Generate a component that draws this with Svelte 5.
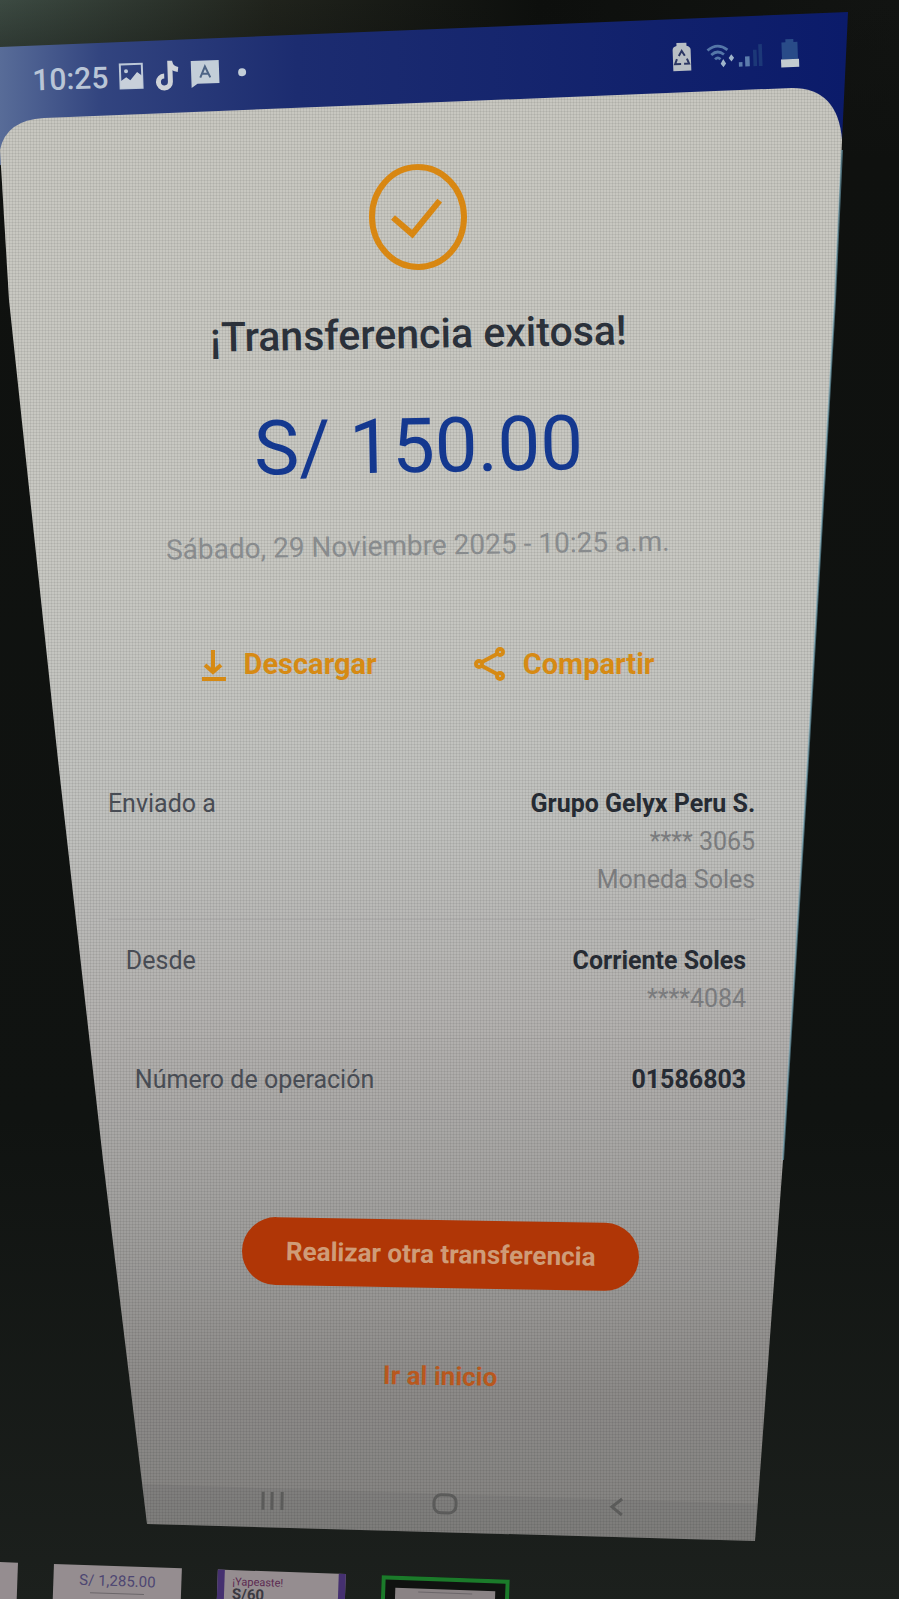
<script>
    const time = '10:25';
    const amount = 'S/ 150.00';
    const date = 'Sábado, 29 Noviembre 2025 - 10:25 a.m.';

    const rows = [
        { label: 'Enviado a', value: 'Grupo Gelyx Peru S.', details: ['**** 3065', 'Moneda Soles'] },
        { label: 'Desde', value: 'Corriente Soles', details: ['****4084'] },
        { label: 'Número de operación', value: '01586803', details: [] }
    ];
</script>

<div class="scene">
    <!-- Phone screen, seen at an angle -->
    <svg class="backdrop" viewBox="0 0 899 1599" preserveAspectRatio="none" aria-hidden="true">
        <defs>
            <linearGradient id="room" x1="0" y1="0" x2="1" y2="0">
                <stop offset="0" stop-color="#3c4a42" />
                <stop offset="0.3" stop-color="#20231c" />
                <stop offset="0.6" stop-color="#0d0f0d" />
                <stop offset="1" stop-color="#121412" />
            </linearGradient>
            <linearGradient id="side" x1="0" y1="0" x2="0" y2="1">
                <stop offset="0" stop-color="#0f110f" stop-opacity="0" />
                <stop offset="0.1" stop-color="#0f110f" />
                <stop offset="0.7" stop-color="#101311" />
                <stop offset="1" stop-color="#1c201d" />
            </linearGradient>
            <linearGradient id="bar" x1="0" y1="0" x2="1" y2="0">
                <stop offset="0" stop-color="#586c98" />
                <stop offset="0.12" stop-color="#32447f" />
                <stop offset="0.35" stop-color="#1c2c70" />
                <stop offset="1" stop-color="#0b1b6a" />
            </linearGradient>
            <linearGradient id="paper" x1="0" y1="0" x2="0" y2="1">
                <stop offset="0" stop-color="#c8c7c0" />
                <stop offset="0.3" stop-color="#c8c8c2" />
                <stop offset="0.5" stop-color="#c0c1be" />
                <stop offset="0.65" stop-color="#b2b0ae" />
                <stop offset="0.78" stop-color="#a09f9d" />
                <stop offset="0.9" stop-color="#8c8a88" />
                <stop offset="1" stop-color="#838280" />
            </linearGradient>
            <pattern id="pixels" width="3" height="3" patternUnits="userSpaceOnUse">
                <path d="M0 0H3M0 0V3" stroke="#000" stroke-opacity="0.12" />
            </pattern>
        </defs>
        <rect width="899" height="1599" fill="url(#room)" />
        <rect width="899" height="1599" fill="url(#side)" />
        <path d="M0 47 848 12 842 140 0 165Z" fill="url(#bar)" />
        <path d="M0 150Q6 120 44 118L792 88Q838 88 842 140L835 300 808 760 783 1160 755 1541 147 1524 103 1160 58 760 9 300Z" fill="url(#paper)" />
        <path d="M0 150Q6 120 44 118L792 88Q838 88 842 140L835 300 808 760 783 1160 755 1541 147 1524 103 1160 58 760 9 300Z" fill="url(#pixels)" />
        <path d="M142 1484 758 1504 755 1541 147 1524Z" fill="#55534f" fill-opacity="0.12" />
        <path d="M842 150 835 300 808 760 783 1160" fill="none" stroke="#6fa3b5" stroke-opacity="0.6" stroke-width="2" />
    </svg>

    <main>
        <header class="status">
            <span class="time">{time}</span>
            <svg width="26" height="28" viewBox="0 0 26 28" aria-hidden="true">
                <rect x="2" y="2" width="22" height="24" fill="none" stroke="#bcc8d8" stroke-width="2" />
                <path d="M2 26V19L8 15 12 18 19 10 24 14V26Z" fill="#c8d0da" />
                <circle cx="8" cy="9" r="2" fill="#bcc8d8" />
            </svg>
            <svg width="26" height="32" viewBox="0 0 26 32" aria-hidden="true">
                <path d="M16 2V23A6 6 0 1 1 10 17M16 3Q17 10 24 11" fill="none" stroke="#cfd3d8" stroke-width="5" />
            </svg>
            <svg width="30" height="28" viewBox="0 0 30 28" aria-hidden="true">
                <path d="M1 1H29V24H7L1 28Z" fill="#c3ced8" />
                <path d="M10 18 15 7 20 18M12 14H18" fill="none" stroke="#4d6485" stroke-width="2" />
            </svg>
            <span class="dot"></span>
            <span class="spacer"></span>
            <svg width="20" height="30" viewBox="0 0 20 30" aria-hidden="true">
                <path d="M1 8Q1 5 5 4V1H15V4Q19 5 19 8V29H1Z" fill="#b9bfc4" />
                <path d="M7 14 10 9 13 14M5 17 3 22H9M15 17 17 22H12" fill="none" stroke="#2c3763" stroke-width="2" />
            </svg>
            <svg class="network" width="60" height="28" viewBox="0 0 66 30" aria-hidden="true">
                <g fill="none" stroke="#5576a8" stroke-width="3">
                    <path d="M2 9Q13 0 24 9M6 14Q13 8 20 14M10 19Q13 16 16 19" />
                </g>
                <path d="M16 24 19 19 22 24 19 28ZM25 18 28 14 31 18 28 22Z" fill="#9fb4ca" />
                <path d="M36 23H40V28H36ZM43 17H48V28H43Z" fill="#5c7cad" />
                <path d="M52 10H56V28H52ZM58 4H62V28H58Z" fill="#1c3878" />
            </svg>
            <svg width="20" height="30" viewBox="0 0 20 30" aria-hidden="true">
                <path d="M2 4H6V1H14V4H18V21H2Z" fill="#294b88" />
                <path d="M1 21H19V29H1Z" fill="#c4ccd0" />
            </svg>
        </header>

        <section class="hero">
            <svg class="check" viewBox="0 0 100 107" aria-hidden="true">
                <ellipse cx="50" cy="53" rx="46" ry="50" />
                <path d="M25 53 44 70 72 37" />
            </svg>
            <h1>¡Transferencia exitosa!</h1>
            <p class="amount">{amount}</p>
            <p class="date">{date}</p>
        </section>

        <div class="actions">
            <button>
                <svg width="28" height="36" viewBox="0 0 28 36" aria-hidden="true">
                    <path d="M13 4V26M5 19 13 26 21 19M2 33H26" />
                </svg>
                Descargar
            </button>
            <button>
                <svg width="34" height="36" viewBox="0 0 34 36" aria-hidden="true">
                    <path d="M9 16 24 8M9 20 24 28" />
                    <circle cx="6" cy="18" r="3" />
                    <circle cx="27" cy="6" r="3" />
                    <circle cx="27" cy="30" r="3" />
                </svg>
                Compartir
            </button>
        </div>

        <dl>
            {#each rows as row}
                <div class="row">
                    <dt>{row.label}</dt>
                    <dd>
                        <strong>{row.value}</strong>
                        {#each row.details as detail}
                            <span>{detail}</span>
                        {/each}
                    </dd>
                </div>
            {/each}
        </dl>

        <div class="footer">
            <button class="primary">Realizar otra transferencia</button>
            <a href="#inicio">Ir al inicio</a>
        </div>

        <nav>
            <button aria-label="Recientes">
                <svg width="26" height="28" viewBox="0 0 26 28"><path d="M3 5V23M12 5V23M22 5V23" /></svg>
            </button>
            <button aria-label="Inicio">
                <svg width="26" height="28" viewBox="0 0 26 28"><rect x="2" y="5" width="22" height="18" rx="7" /></svg>
            </button>
            <button aria-label="Atrás">
                <svg width="26" height="28" viewBox="0 0 26 28"><path d="M18 6 8 14 18 22" /></svg>
            </button>
        </nav>

        <div class="thumbs">
            <div class="thumb"></div>
            <div class="thumb receipt">S/ 1,285.00<i></i></div>
            <div class="thumb purple"><em>¡Yapeaste!</em><b>S/60</b></div>
            <div class="thumb selected"><i></i></div>
        </div>
    </main>
</div>

<style>
    :global(body) {
        margin: 0;
        background: #101210;
    }

    .scene {
        display: grid;
        min-height: 100vh;
        overflow: hidden;
        font-family: Roboto, "Open Sans", sans-serif;
        color: #2b313a;
    }
    .backdrop {
        grid-area: 1 / 1;
        width: 100%;
        height: 100%;
        contain: size;
    }
    main {
        grid-area: 1 / 1;
        z-index: 1;
        min-width: 0;
        display: flex;
        flex-direction: column;
    }

    button {
        border: 0;
        padding: 0;
        background: none;
        font: inherit;
        color: inherit;
        cursor: pointer;
    }
    h1, p, dl, dd {
        margin: 0;
    }

    .status {
        display: flex;
        align-items: center;
        gap: 10px;
        height: 40px;
        margin-top: 45px;
        padding: 0 11% 0 32px;
        transform: rotate(-2deg);
    }
    .time {
        font-size: 30px;
        font-weight: 500;
        color: #b9c5d6;
    }
    .dot {
        width: 8px;
        height: 8px;
        margin-left: 8px;
        border-radius: 50%;
        background: #c3ced8;
    }
    .spacer {
        flex: 1;
    }
    .network {
        margin: 0 4px;
    }

    .hero {
        display: flex;
        flex-direction: column;
        align-items: center;
        padding: 79px 7% 0 0;
        text-align: center;
    }
    .hero > * {
        transform: rotate(-1deg);
    }
    .check {
        width: 100px;
        height: 107px;
        fill: none;
        stroke: #d88712;
        stroke-width: 6;
    }
    h1 {
        margin-top: 39px;
        font-size: 41px;
        font-weight: 500;
        line-height: 48px;
    }
    .amount {
        margin-top: 48px;
        font-size: 76px;
        line-height: 80px;
        color: #14388f;
    }
    .date {
        margin-top: 42px;
        font-size: 28px;
        line-height: 36px;
        color: #888b8d;
    }

    .actions {
        display: flex;
        justify-content: center;
        gap: 96px;
        margin-top: 82px;
        padding-right: 5%;
        color: #d68a14;
    }
    .actions button {
        display: flex;
        align-items: center;
        gap: 16px;
        font-size: 29px;
        font-weight: 700;
        line-height: 36px;
    }
    .actions svg {
        fill: none;
        stroke: currentColor;
        stroke-width: 4;
    }

    dl {
        margin-top: 81px;
        font-size: 25px;
        line-height: 38px;
    }
    .row {
        display: flex;
        justify-content: space-between;
        margin: 0 16% 0 12%;
        padding: 22px 0 20px;
        border-bottom: 1px solid #8a898740;
    }
    .row:nth-child(2) {
        margin: 0 17% 0 14%;
    }
    .row:nth-child(3) {
        margin: 0 17% 0 15%;
    }
    dt {
        color: #484c54;
    }
    dd {
        display: flex;
        flex-direction: column;
        align-items: flex-end;
        color: #7a7b7d;
    }
    dd strong {
        color: #262b33;
    }

    .footer {
        display: flex;
        flex-direction: column;
        align-items: center;
        gap: 70px;
        margin-top: 100px;
        padding-right: 2%;
    }
    .footer > * {
        transform: rotate(1deg);
    }
    .footer .primary {
        padding: 0 44px;
        border-radius: 34px;
        background: #b03606;
        font-size: 26px;
        font-weight: 700;
        line-height: 68px;
        color: #cf9c78;
    }
    .footer a {
        font-size: 26px;
        font-weight: 700;
        line-height: 36px;
        color: #b8581e;
        text-decoration: none;
    }

    nav {
        display: flex;
        justify-content: center;
        gap: 146px;
        margin-top: 96px;
        padding-right: 1%;
        transform: rotate(1deg);
    }
    nav svg {
        display: block;
        fill: none;
        stroke: #5b5b5a;
        stroke-width: 3;
    }

    .thumbs {
        display: flex;
        align-items: flex-start;
        gap: 36px;
        height: 34px;
        margin-top: 44px;
        font-size: 15px;
        line-height: 18px;
        transform: rotate(2deg);
        transform-origin: 0 0;
    }
    .thumb {
        width: 128px;
        height: 60px;
        box-sizing: border-box;
        padding-top: 6px;
        background: #958d90;
        color: #4d4672;
        text-align: center;
    }
    .thumb:first-child {
        width: 18px;
    }
    .thumb i {
        display: block;
        width: 54px;
        height: 1px;
        margin: 3px auto;
        background: #6b666a;
    }
    .thumb em, .thumb b {
        display: block;
        padding-left: 8px;
        font-size: 11px;
        font-style: normal;
        line-height: 12px;
        text-align: left;
        color: #5c2a51;
    }
    .thumb b {
        font-size: 15px;
        color: #3b3942;
    }
    .purple {
        border: solid #453070;
        border-width: 0 7px;
    }
    .selected {
        padding-top: 8px;
        border: 4px solid #1b7a2a;
        background: linear-gradient(#8a8385, #8a8385) center 8px / 100px 60px no-repeat #101210;
    }
</style>
